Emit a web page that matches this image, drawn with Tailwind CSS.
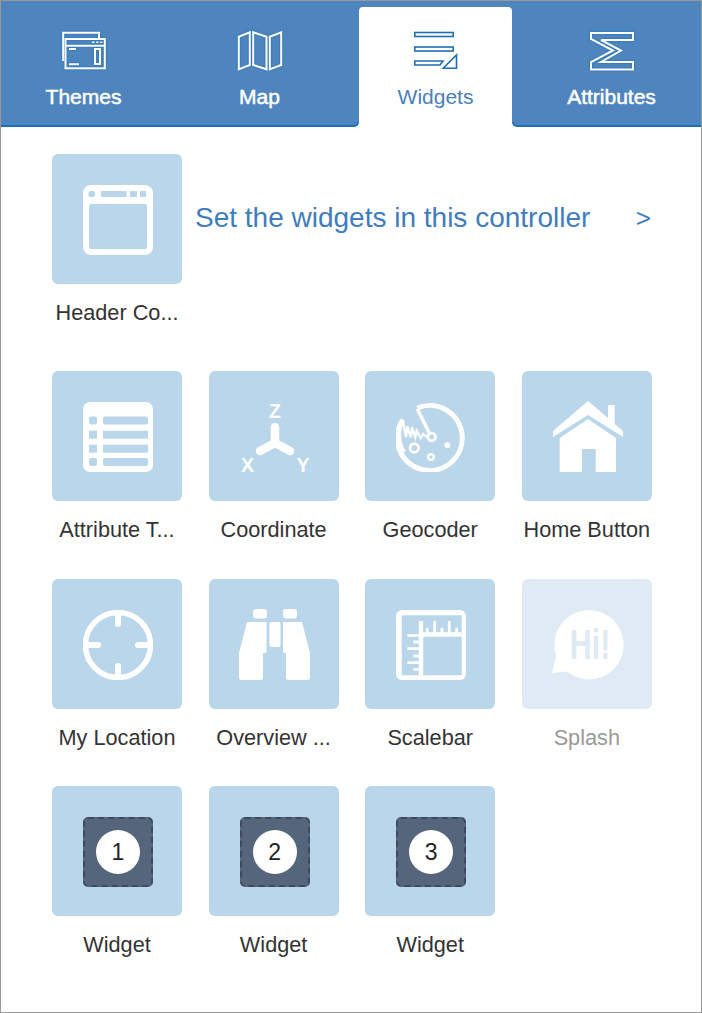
<!DOCTYPE html>
<html lang="en">
<head>
    <meta charset="UTF-8">
    <meta name="viewport" content="width=device-width, initial-scale=1.0">
    <title>Widgets</title>
    <script src="https://cdn.jsdelivr.net/npm/@tailwindcss/browser@4"></script>
</head>
<body class="bg-white font-['Liberation_Sans',Arial,sans-serif]">
<div class="w-[702px] h-[1013px] border border-[#999999] overflow-hidden text-[#333333]">

    <!-- Tabs -->
    <div class="flex gap-[23px] h-[126px] px-[6px] pt-[6px] bg-[#4f85bf] border-b-2 border-[#1f6fb5]">
        <div class="w-[153px] h-[118px] flex flex-col items-center pt-[24px] text-white [-webkit-text-stroke:0.5px_white]">
            <svg class="[filter:drop-shadow(0_0_1px_#1f6fb5)]" width="46" height="40" viewBox="0 0 46 40" fill="none" stroke="#fff" stroke-width="2">
                <path d="M2.200 30V1.700H38V8"/>
                <rect x="4.500" y="8" width="39.300" height="29.300"/>
                <path d="M4.500 14.700H43.800M8 18H15M8 33.300H18M34 18H39V33H34Z"/>
                <path d="M31 11.300H33.500M35 11.300H37.500M39 11.300H41.500" stroke-width="1.500"/>
            </svg>
            <div class="mt-[14px] h-[24px] leading-[24px] text-[21px]">Themes</div>
        </div>
        <div class="w-[153px] h-[118px] flex flex-col items-center pt-[24px] text-white [-webkit-text-stroke:0.5px_white]">
            <svg class="[filter:drop-shadow(0_0_1px_#1f6fb5)]" width="46" height="40" viewBox="0 0 46 40" fill="none" stroke="#fff" stroke-width="2">
                <path d="M1.800 5.700L12.800 1.300V34L1.800 38.300Z"/>
                <path d="M16.200 1.300L29.500 5.700V38.300L16.200 34Z"/>
                <path d="M32.800 5.700L44.200 1.300V34L32.800 38.300Z"/>
            </svg>
            <div class="mt-[14px] h-[24px] leading-[24px] text-[21px]">Map</div>
        </div>
        <div class="relative w-[153px] h-[120px] flex flex-col items-center pt-[24px] bg-white rounded-t-[4px] text-[#4a7fbd]">
            <svg width="46" height="40" viewBox="0 0 46 40" fill="none" stroke="#1f6fb5" stroke-width="1.600">
                <rect x="1.800" y="1.500" width="38.400" height="4"/>
                <rect x="1.800" y="16" width="38.400" height="4"/>
                <path d="M1.800 30H30L27 34H1.800Z"/>
                <path d="M43.500 24V37.300H30.200Z"/>
            </svg>
            <div class="mt-[14px] h-[24px] leading-[24px] text-[21px]">Widgets</div>
            <!-- curved feet of the active tab -->
            <div class="absolute bottom-0 -left-[5px] w-[5px] h-[5px] bg-white">
                <div class="w-full h-full bg-[#4f85bf] border-b-2 border-r-2 border-[#1f6fb5] rounded-br-[5px]"></div>
            </div>
            <div class="absolute bottom-0 -right-[5px] w-[5px] h-[5px] bg-white">
                <div class="w-full h-full bg-[#4f85bf] border-b-2 border-l-2 border-[#1f6fb5] rounded-bl-[5px]"></div>
            </div>
        </div>
        <div class="w-[153px] h-[118px] flex flex-col items-center pt-[24px] text-white [-webkit-text-stroke:0.5px_white]">
            <svg class="[filter:drop-shadow(0_0_1px_#1f6fb5)]" width="46" height="40" viewBox="0 0 46 40" fill="none" stroke="#fff" stroke-width="2">
                <path d="M2 2H44V9H12L32 19.500L12 31H44V38.500H2V31L24 19.500L2 8Z"/>
            </svg>
            <div class="mt-[14px] h-[24px] leading-[24px] text-[21px]">Attributes</div>
        </div>
    </div>

    <div class="pl-[51px] pt-[27px]">
        <!-- Header controller row -->
        <div class="flex h-[217px]">
            <div class="w-[130px]">
                <div class="w-[130px] h-[130px] pl-[2px] pt-[2px] rounded-[6px] bg-[#b9d6ea] flex items-center justify-center">
                    <svg width="70" height="70" viewBox="0 0 70 70">
                        <rect width="70" height="70" rx="8" fill="#fff"/>
                        <g fill="#b9d6ea">
                            <circle cx="8.700" cy="9" r="3.300"/>
                            <rect x="18" y="6" width="25.500" height="6"/>
                            <rect x="47" y="6" width="7" height="6"/>
                            <rect x="57" y="6" width="6" height="6"/>
                            <rect x="6" y="19" width="58" height="45" rx="2"/>
                        </g>
                    </svg>
                </div>
                <div class="mt-[16px] h-[26px] leading-[26px] text-[21.700px] text-center whitespace-nowrap">Header Co...</div>
            </div>
            <div class="w-[469px] h-[128px] pl-[13px] flex items-center justify-between text-[28px] text-[#3f7cc0]">
                <span>Set the widgets in this controller</span>
                <span class="text-[26px]">&gt;</span>
            </div>
        </div>

        <!-- Widget grid -->
        <div class="grid grid-cols-[repeat(4,130px)] gap-x-[26.6px] auto-rows-[207.5px]">
            <div>
                <div class="w-[130px] h-[130px] pl-[2px] pt-[2px] rounded-[6px] bg-[#b9d6ea] flex items-center justify-center">
                    <svg width="70" height="70" viewBox="0 0 70 70">
                        <rect width="70" height="70" rx="7" fill="#fff"/>
                        <g fill="#b9d6ea">
                            <rect x="6" y="14.500" width="8" height="8" rx="2"/>
                            <rect x="20" y="14.500" width="45" height="8" rx="2"/>
                            <rect x="6" y="28.700" width="8" height="8"/>
                            <rect x="20" y="28.700" width="45" height="8"/>
                            <rect x="6" y="42.700" width="8" height="8"/>
                            <rect x="20" y="42.700" width="45" height="8"/>
                            <rect x="6" y="56" width="8" height="8" rx="2"/>
                            <rect x="20" y="56" width="45" height="8" rx="2"/>
                        </g>
                    </svg>
                </div>
                <div class="mt-[16px] h-[26px] leading-[26px] text-[21.700px] text-center whitespace-nowrap">Attribute T...</div>
            </div>
            <div>
                <div class="w-[130px] h-[130px] pl-[2px] pt-[2px] rounded-[6px] bg-[#b9d6ea] flex items-center justify-center">
                    <svg class="overflow-visible" width="70" height="70" viewBox="0 0 70 70" fill="#fff">
                        <text x="35" y="16" text-anchor="middle" font-size="19.500" font-weight="700" font-family="Liberation Sans">Z</text>
                        <path d="M35 25V41M35 41L20 49M35 41L50 49" stroke="#fff" stroke-width="8.500" stroke-linecap="round" stroke-linejoin="round" fill="none"/>
                        <text x="7.500" y="70" text-anchor="middle" font-size="19.500" font-weight="700" font-family="Liberation Sans">X</text>
                        <text x="63" y="70" text-anchor="middle" font-size="19.500" font-weight="700" font-family="Liberation Sans">Y</text>
                    </svg>
                </div>
                <div class="mt-[16px] h-[26px] leading-[26px] text-[21.700px] text-center whitespace-nowrap">Coordinate</div>
            </div>
            <div>
                <div class="w-[130px] h-[130px] pl-[2px] pt-[2px] rounded-[6px] bg-[#b9d6ea] flex items-center justify-center">
                    <svg width="70" height="70" viewBox="0 0 70 70" fill="none" stroke="#fff">
                        <path d="M21.300 6A32.500 32.500 0 1 1 6.700 18" stroke-width="5" transform="translate(0 0)"/>
                        <path d="M21.300 7L33.300 31" stroke-width="3.500"/>
                        <path d="M6.700 17.700C1 27 2 42 8 50" stroke-width="4.500"/>
                        <path d="M6.700 17.700L10 35.300L11.300 24.300L14.700 35.300L16 25.300L19.300 35.300L20.700 28.700L24.700 36L27.300 32L32.300 36" stroke-width="2.300"/>
                        <circle cx="35.700" cy="35" r="3.800" stroke-width="2.800"/>
                        <circle cx="18.300" cy="46" r="4.300" stroke-width="2.800"/>
                        <circle cx="35" cy="55" r="2.800" stroke-width="2.400"/>
                        <circle cx="51.300" cy="43.300" r="3" fill="#fff" stroke="none"/>
                    </svg>
                </div>
                <div class="mt-[16px] h-[26px] leading-[26px] text-[21.700px] text-center whitespace-nowrap">Geocoder</div>
            </div>
            <div>
                <div class="w-[130px] h-[130px] pl-[2px] pt-[2px] rounded-[6px] bg-[#b9d6ea] flex items-center justify-center">
                    <svg width="72" height="72" viewBox="0 0 72 72" fill="#fff">
                        <path d="M36 0L56 17V4H62.700V23L71 30V36L36 14L1 36V30Z"/>
                        <path d="M36 18L64 37V71H43.700V48H30V71H7.700V37Z"/>
                    </svg>
                </div>
                <div class="mt-[16px] h-[26px] leading-[26px] text-[21.700px] text-center whitespace-nowrap">Home Button</div>
            </div>

            <div>
                <div class="w-[130px] h-[130px] pl-[2px] pt-[2px] rounded-[6px] bg-[#b9d6ea] flex items-center justify-center">
                    <svg width="70" height="70" viewBox="0 0 70 70" fill="none" stroke="#fff">
                        <circle cx="35" cy="35" r="32.500" stroke-width="5.500"/>
                        <path d="M35 4V14M35 56V66M4 35H15M55 35H66" stroke-width="6" stroke-linecap="round"/>
                    </svg>
                </div>
                <div class="mt-[16px] h-[26px] leading-[26px] text-[21.700px] text-center whitespace-nowrap">My Location</div>
            </div>
            <div>
                <div class="w-[130px] h-[130px] pl-[2px] pt-[2px] rounded-[6px] bg-[#b9d6ea] flex items-center justify-center">
                    <svg width="72" height="72" viewBox="0 0 72 72" fill="#fff">
                        <rect x="14" y="0" width="14" height="9.500" rx="3"/>
                        <rect x="44" y="0" width="14" height="9.500" rx="3"/>
                        <path d="M8 13H27.500V44H24V69A2 2 0 0 1 22 71H2A2 2 0 0 1 0 69V44Z"/>
                        <path d="M44 13H63L71 44V69A2 2 0 0 1 69 71H49A2 2 0 0 1 47 69V44H44Z"/>
                        <rect x="30.500" y="13" width="11" height="25" rx="2"/>
                    </svg>
                </div>
                <div class="mt-[16px] h-[26px] leading-[26px] text-[21.700px] text-center whitespace-nowrap">Overview ...</div>
            </div>
            <div>
                <div class="w-[130px] h-[130px] pl-[2px] pt-[2px] rounded-[6px] bg-[#b9d6ea] flex items-center justify-center">
                    <svg width="70" height="70" viewBox="0 0 70 70">
                        <rect width="70" height="70" rx="6" fill="#fff"/>
                        <rect x="5.700" y="5.300" width="60" height="60" fill="#b9d6ea"/>
                        <g stroke="#fff" fill="none">
                            <path d="M24 24.500H65.700M25 11V65.300" stroke-width="4.500"/>
                            <path d="M31.300 24V17.700M38.700 24V11M46 24V17.700M53.300 24V11M60.700 24V17.700" stroke-width="2.800"/>
                            <path d="M11.300 25.300H25M17.300 32H25M11.300 38.700H25M17.300 46H25M11.300 52.700H25M17.300 59.300H25" stroke-width="2.800"/>
                        </g>
                    </svg>
                </div>
                <div class="mt-[16px] h-[26px] leading-[26px] text-[21.700px] text-center whitespace-nowrap">Scalebar</div>
            </div>
            <div>
                <div class="w-[130px] h-[130px] pl-[2px] pt-[2px] rounded-[6px] bg-[#dfeaf5] flex items-center justify-center">
                    <svg width="72" height="72" viewBox="0 0 72 72">
                        <circle cx="37" cy="35.700" r="34.700" fill="#fff"/>
                        <path d="M5 44L0 64L20 62Z" fill="#fff"/>
                        <text x="17.700" y="50" font-size="42" font-weight="700" font-family="Liberation Sans" fill="#dfeaf5" textLength="40.600" lengthAdjust="spacingAndGlyphs">Hi!</text>
                    </svg>
                </div>
                <div class="mt-[16px] h-[26px] leading-[26px] text-[21.700px] text-center whitespace-nowrap text-[#999999]">Splash</div>
            </div>

            <div>
                <div class="w-[130px] h-[130px] pl-[2px] pt-[2px] rounded-[6px] bg-[#b9d6ea] flex items-center justify-center">
                    <div class="w-[70px] h-[70px] rounded-[5px] bg-[#55657c] border-2 border-dashed border-[#3d4a5e] flex items-center justify-center">
                        <div class="w-[44px] h-[44px] rounded-full bg-white flex items-center justify-center text-[23px] text-[#222222]">1</div>
                    </div>
                </div>
                <div class="mt-[16px] h-[26px] leading-[26px] text-[21.700px] text-center whitespace-nowrap">Widget</div>
            </div>
            <div>
                <div class="w-[130px] h-[130px] pl-[2px] pt-[2px] rounded-[6px] bg-[#b9d6ea] flex items-center justify-center">
                    <div class="w-[70px] h-[70px] rounded-[5px] bg-[#55657c] border-2 border-dashed border-[#3d4a5e] flex items-center justify-center">
                        <div class="w-[44px] h-[44px] rounded-full bg-white flex items-center justify-center text-[23px] text-[#222222]">2</div>
                    </div>
                </div>
                <div class="mt-[16px] h-[26px] leading-[26px] text-[21.700px] text-center whitespace-nowrap">Widget</div>
            </div>
            <div>
                <div class="w-[130px] h-[130px] pl-[2px] pt-[2px] rounded-[6px] bg-[#b9d6ea] flex items-center justify-center">
                    <div class="w-[70px] h-[70px] rounded-[5px] bg-[#55657c] border-2 border-dashed border-[#3d4a5e] flex items-center justify-center">
                        <div class="w-[44px] h-[44px] rounded-full bg-white flex items-center justify-center text-[23px] text-[#222222]">3</div>
                    </div>
                </div>
                <div class="mt-[16px] h-[26px] leading-[26px] text-[21.700px] text-center whitespace-nowrap">Widget</div>
            </div>
        </div>
    </div>
</div>
</body>
</html>
